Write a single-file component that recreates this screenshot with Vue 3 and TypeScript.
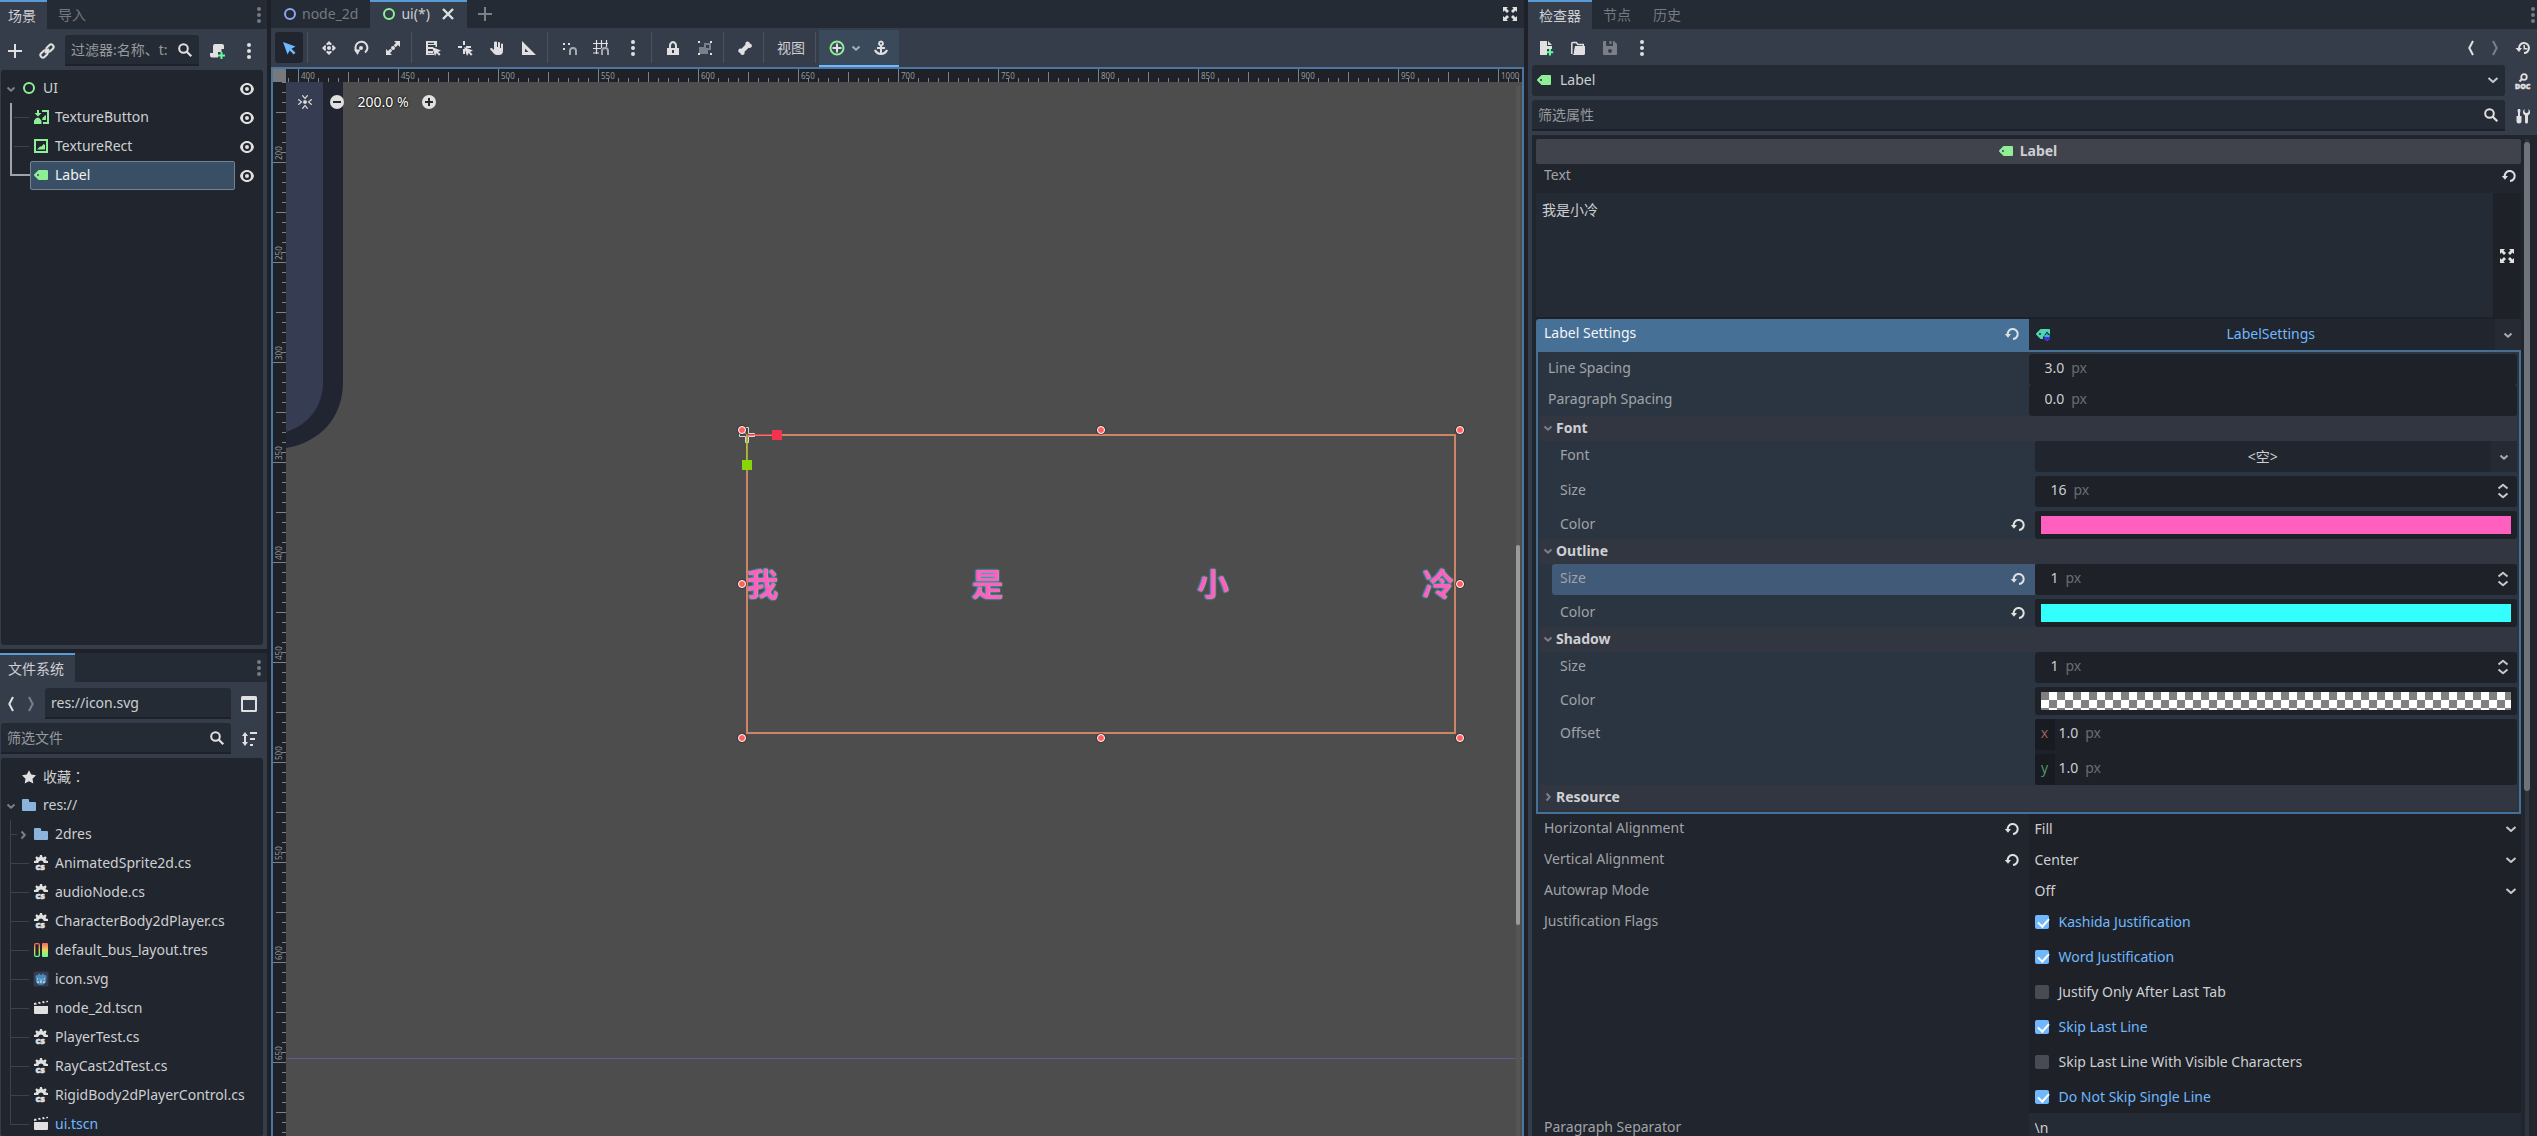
<script setup lang="ts">
import { h, ref } from 'vue'

const W = '#e0e0e0'
const G = '#8eef97'

const scroll = `<path fill="${W}" d="M6 1a2 2 0 0 0-2 2v7H1v2.500a2 2 0 0 0 2 2h7.500a2 2 0 0 0 2-2V6H15V3a2 2 0 0 0-2-2z"/>`
const expand = `<path fill="${W}" d="M1 1h5L4.500 2.500 7 5 5 7 2.500 4.500 1 6zM15 1v5l-1.500-1.500L11 7 9 5l2.500-2.500L10 1zM1 15v-5l1.500 1.500L5 9l2 2-2.500 2.500L6 15zM15 15h-5l1.500-1.500L9 11l2-2 2.500 2.500L15 10z"/>`
const cursor = `<path fill="${W}" d="M7 7l3 9 1.700-3 2.300 2.700 1.500-1.400-2.500-2.400 3-1.500z"/>`
const magnet = `<path fill="none" stroke="#a5a8ad" stroke-width="2" d="M9 15v-4a3 3 0 0 1 6 0v4"/>`

const icons: Record<string, string> = {
  add: `<path fill="${W}" d="M7 1v6H1v2h6v6h2V9h6V7H9V1z"/>`,
  addTab: `<path fill="#7b7f87" d="M7 1v6H1v2h6v6h2V9h6V7H9V1z"/>`,
  link: `<g fill="none" stroke="${W}" stroke-width="2"><rect x="7" y="2.500" width="8" height="5" rx="2.500" transform="rotate(-45 11 5)"/><rect x="1" y="8.500" width="8" height="5" rx="2.500" transform="rotate(-45 5 11)"/><path d="M6 10l4-4"/></g>`,
  search: `<circle cx="6.500" cy="6.500" r="4.300" fill="none" stroke="${W}" stroke-width="2"/><path stroke="${W}" stroke-width="2.200" d="M9.500 9.500L14.300 14.300"/>`,
  scriptNew: scroll + `<path fill="#363d4a" d="M9 9h7v7H9z"/><path fill="#5fff97" d="M11.500 9v2.500H9v2h2.500V16h2v-2.500H16v-2h-2.500V9z"/>`,
  dots: `<g fill="${W}"><circle cx="8" cy="2" r="2"/><circle cx="8" cy="8" r="2"/><circle cx="8" cy="14" r="2"/></g>`,
  dotsDim: `<g fill="#757980"><circle cx="8" cy="2" r="2"/><circle cx="8" cy="8" r="2"/><circle cx="8" cy="14" r="2"/></g>`,
  control: `<circle cx="8" cy="8" r="5" fill="none" stroke="${G}" stroke-width="2"/>`,
  node2d: `<circle cx="8" cy="8" r="5" fill="none" stroke="#8da5f3" stroke-width="2"/>`,
  texButton: `<path fill="${G}" d="M4 1h2v3h2.500L5 7.500 1.500 4H4zM1 15v-2.500a2 2 0 0 1 1-2c1-2.500 4.500-2.500 5.500 0L8.500 12v3zM9 1h7v14h-6v-2h4V3H9zM9 11l1-3h1l1-2 1 1v4z"/>`,
  texRect: `<path fill="${G}" fill-rule="evenodd" d="M1 1h14v14H1zM3 3v10h10V3zM4 11.500h8V7l-1.500-1-2 2.500H7z"/>`,
  label: `<path fill="${G}" fill-rule="evenodd" d="M6 3a1 1 0 0 0-.7.3l-4 4a1 1 0 0 0 0 1.400l4 4A1 1 0 0 0 6 13h8a1 1 0 0 0 1-1V4a1 1 0 0 0-1-1zM5 7a1 1 0 0 1 0 2 1 1 0 0 1 0-2z"/>`,
  labelSettings: `<path fill="#4fd6b3" fill-rule="evenodd" d="M6 3a1 1 0 0 0-.7.3l-4 4a1 1 0 0 0 0 1.400l4 4A1 1 0 0 0 6 13h8a1 1 0 0 0 1-1V4a1 1 0 0 0-1-1zM5 7a1 1 0 0 1 0 2 1 1 0 0 1 0-2z"/><path fill="#21252d" d="M12 5.500l-4 5.500v2h1.500V9h5v2H15V9z"/><path fill="#25b6f0" d="M12 7l-2.500 4h5z"/><path fill="#3a33e6" d="M9 11h6v2.500H9z"/><path fill="#8b2fa8" d="M9.500 13.500h5L12.500 15h-1z"/>`,
  eye: `<path fill="${W}" fill-rule="evenodd" d="M8 2C4.500 2 1.800 4.500 1 8c.8 3.500 3.500 6 7 6s6.200-2.500 7-6c-.8-3.500-3.500-6-7-6zM8 4a4 4 0 0 1 0 8 4 4 0 0 1 0-8zM8 6a2 2 0 0 0 0 4 2 2 0 0 0 0-4z"/>`,
  down: `<path fill="none" stroke="#7b7f87" stroke-width="2" stroke-linejoin="round" d="M4.500 6.500L8 9.800l3.500-3.300"/>`,
  downMid: `<path fill="none" stroke="#a9acb1" stroke-width="2" stroke-linejoin="round" d="M4.500 6.500L8 9.800l3.500-3.300"/>`,
  right: `<path fill="none" stroke="#7b7f87" stroke-width="2" stroke-linejoin="round" d="M6.500 4.500L9.800 8l-3.300 3.500"/>`,
  drop: `<path fill="none" stroke="#c6c8cb" stroke-width="2" stroke-linejoin="round" d="M3.500 6L8 10l4.500-4"/>`,
  back: `<path fill="none" stroke="${W}" stroke-width="2" d="M10 1L6.300 8l3.700 7"/>`,
  forward: `<path fill="none" stroke="#7b7f87" stroke-width="2" d="M6 1l3.700 7L6 15"/>`,
  splitMode: `<path fill="${W}" fill-rule="evenodd" d="M1.500 0h13A1.500 1.500 0 0 1 16 1.500v13a1.500 1.500 0 0 1-1.500 1.500h-13A1.500 1.500 0 0 1 0 14.500v-13A1.500 1.500 0 0 1 1.500 0zM2 4v10h12V4z"/>`,
  sort: `<path fill="${W}" d="M4 1l3 4H5v6h2l-3 4-3-4h2V5H1zM9 1h7v2H9zM9 7h5v2H9zM9 13h3v2H9z"/>`,
  star: `<path fill="${W}" d="M8 1.200l2.200 4.300 4.800.8-3.500 3.400.8 4.800L8 12.300l-4.300 2.200.8-4.800L1 6.300l4.800-.8z"/>`,
  folder: `<path fill="#8ab4dd" d="M2 2a1 1 0 0 0-1 1v10a1 1 0 0 0 1 1h12a1 1 0 0 0 1-1V6a1 1 0 0 0-1-1H9a1 1 0 0 1-1-1V3a1 1 0 0 0-1-1z"/>`,
  cs: `<path fill="${W}" d="M7 0h2l.5 2 1 .4L12.300 1.300l1.400 1.400L12.600 4.500l.4 1 2 .5v2h-4.200A3 3 0 0 0 8 5.500 3 3 0 0 0 5.200 8H1V6l2-.5.4-1L2.300 2.700l1.400-1.400L5.500 2.400l1-.4z"/><text x="2.500" y="15.300" font-size="9" font-weight="900" fill="${W}" stroke="${W}" stroke-width=".5">cs</text>`,
  bus: `<defs><linearGradient id="busFill" x1="0" x2="0" y1="0" y2="1"><stop offset="0" stop-color="#ff5f5f"/><stop offset=".5" stop-color="#e1da5b"/><stop offset="1" stop-color="#5fff97"/></linearGradient></defs><rect x="1.700" y="1.700" width="4.600" height="12.600" rx="1" fill="none" stroke="url(#busFill)" stroke-width="1.300"/><rect x="9" y="1" width="6" height="14" rx="1" fill="url(#busFill)"/>`,
  godot: `<rect width="15" height="15" x=".5" y=".5" rx="1.500" fill="#363d52"/><path fill="#478cbf" d="M2.500 5l1.300-1.200L5 4.500l.5-2 1.500.6L7.500 4h1l.5-.9 1.500-.6.5 2 1.200-.7L13.500 5 13 11c-1 2-3 2.800-5 2.800S4 13 3 11z"/><g fill="#fff"><circle cx="5.300" cy="8" r="1.100"/><circle cx="10.700" cy="8" r="1.100"/><path d="M4 10.500h2v1H4zM7 10.500h2v1H7zM10 10.500h2v1h-2zM7.700 8h.6v2h-.6z"/></g><g fill="#414042"><circle cx="5.400" cy="8" r=".7"/><circle cx="10.600" cy="8" r=".7"/></g>`,
  scene: `<path fill="${W}" d="M1 6h14v7a1 1 0 0 1-1 1H2a1 1 0 0 1-1-1zM1 3l2-.4.8 1.800L1 5zM5 2.200l2-.4.8 1.800-2 .4zM9 1.500l2-.4.8 1.800-2 .4zM13 1l2-.3V2l-1.500.5z"/>`,
  close: `<path stroke="${W}" stroke-width="2.400" d="M3 3l10 10M13 3L3 13"/>`,
  expand,
  select: `<path fill="#6fb8ff" d="M2 2l4.500 12.500 2.200-4 4 4 1.800-1.800-4-4 4-2.200z"/>`,
  move: `<g fill="${W}"><circle cx="8" cy="8" r="2"/><path d="M8 1l3 3-1 1H9L8 4.300 7 5H6L5 4zM8 15l-3-3 1-1h1l1 .7 1-.7h1l1 1zM1 8l3-3 1 1v1l-.7 1 .7 1v1l-1 1zM15 8l-3 3-1-1V9l.7-1-.7-1V6l1-1z"/></g>`,
  rotate: `<path fill="none" stroke="${W}" stroke-width="2" d="M3.800 11.500A6 6 0 1 1 12 12.500"/><path fill="${W}" d="M1 9.500h6.500L4.500 15z"/><circle cx="8" cy="8" r="2" fill="${W}"/>`,
  scale: `<circle cx="8" cy="8" r="2" fill="${W}"/><path fill="${W}" d="M9 1h6v6l-2-2-2.300 2.300-2-2L11 3zM7 15H1V9l2 2 2.300-2.300 2 2L5 13z"/>`,
  listSelect: `<path fill="${W}" fill-rule="evenodd" d="M1 1h11v6h-1.500V5H3v2h5v2H3v2h5v2H3v.5h6V15H1zM3 2.800V4h6V2.800z"/>` + cursor,
  pivot: `<path fill="${W}" d="M6 1h2v4H6zM1 6h4v2H1zM9 6h5v2H9zM6 9h2v5H6z"/>` + cursor,
  pan: `<path fill="${W}" d="M7 1.500c.8 0 1 .4 1 1V7h1V3c0-1.300 2-1.300 2 0v5h1V4.500c0-1.300 2-1.300 2 0V11c0 2.500-1.500 4-4 4H8c-2 0-3-1-4-2.500L1.300 9.500c-.6-1.200.8-2 1.700-1.200L5 10V2.500c0-.6 1-1 2-1z"/>`,
  ruler: `<path fill="${W}" fill-rule="evenodd" d="M1 1v14h14zM4 8.500l3.500 3.500H4z"/>`,
  smartSnap: `<path fill="${W}" d="M2 3h2v2H2zM2 8h2v2H2zM7 3h2v2H7z"/>` + magnet,
  gridSnap: `<path fill="none" stroke="${W}" stroke-width="1.200" d="M3.500 0v14M8.500 0v8M13.500 0v7M0 3.500h15M0 8.500h8M0 13h6"/>` + magnet,
  lock: `<path fill="${W}" fill-rule="evenodd" d="M8 1a5 5 0 0 0-4 5v2H2v7h12V8h-2V6a5 5 0 0 0-4-5zM8 3a3 3 0 0 1 2 3v2H6V6a3 3 0 0 1 2-3zM7 10h2v3H7z"/>`,
  group: `<path fill="#7b7f87" fill-rule="evenodd" d="M7 3h7v7h-3v4H2V7h5zM9 5v3h3V5z"/><path fill="${W}" d="M1 1h2v2H1zM13 1h2v2h-2zM1 13h2v2H1zM13 13h2v2h-2z"/>`,
  bone: `<path fill="${W}" d="M10.500 1.500c-1.700 0-2.500 1.500-2 3L4.500 8.800c-1.500-.6-3.200.3-3.200 2 0 1.300 1 2.100 2 2.200.1 1.200 1 2 2.200 2 1.700 0 2.600-1.600 2-3.200l4.200-4c1.500.6 3.200-.4 3.200-2 0-1.200-1-2.100-2.100-2.200-.1-1.200-1.100-2.100-2.300-2.100z"/>`,
  container: `<circle cx="8" cy="8" r="6.500" fill="none" stroke="${G}" stroke-width="2"/><path fill="${W}" d="M7 3.500h2V7h3.500v2H9v3.500H7V9H3.500V7H7z"/>`,
  anchor: `<path fill="${W}" fill-rule="evenodd" d="M8 .5a3 3 0 0 0-1 5.800V7H4v2h3v3.800C5 12.500 3.500 11 3 9.500l-2 .7C2 13 4.500 15 8 15s6-2 7-4.800l-2-.7c-.5 1.500-2 3-4 3.300V9h3V7H9v-.7A3 3 0 0 0 8 .5zM8 2.500a1 1 0 0 1 0 2 1 1 0 0 1 0-2z"/>`,
  centerView: `<g fill="${W}" stroke="#22252b" stroke-opacity=".4" stroke-width=".4"><circle cx="8" cy="8" r="2"/><path d="M5 1h1l2 2.500L10 1h1v1L8 5.500 5 2zM5 15h1l2-2.500 2 2.500h1v-1l-3-3.500L5 14zM1 5v1l2.500 2L1 10v1h1l3.500-3L2 5zM15 5v1l-2.500 2 2.500 2v1h-1l-3.500-3L14 5z"/></g>`,
  minus: `<circle cx="8" cy="8" r="7" fill="${W}"/><path fill="#26292f" d="M4 7h8v2H4z"/>`,
  plus: `<circle cx="8" cy="8" r="7" fill="${W}"/><path fill="#26292f" d="M7 4h2v3h3v2H9v3H7V9H4V7h3z"/>`,
  fileNew: `<path fill="${W}" d="M2 1h7v5h5v3H9v6H2zM10 1l4 4h-4z"/><path fill="#5fff97" d="M11 9v2.200H8.800v2H11v2.300h2v-2.300h2.200v-2H13V9z"/>`,
  open: `<path fill="none" stroke="${W}" stroke-width="1.500" d="M1.800 14V3.500a1 1 0 0 1 1-1h3.500l1.500 2h5.500V7"/><path fill="${W}" d="M5 6h10v7.500a1.500 1.500 0 0 1-1.500 1.500H2.500C4 14 4 13 4 11z"/>`,
  save: `<path fill="#7b7f87" fill-rule="evenodd" d="M2 1a1 1 0 0 0-1 1v12a1 1 0 0 0 1 1h12a1 1 0 0 0 1-1V4l-3-3h-1v5H4V1zM8 9a2 2 0 0 1 0 4 2 2 0 0 1 0-4zM7.500 1H9.500v3h-2z"/>`,
  history: `<path fill="none" stroke="${W}" stroke-width="2" d="M4 8.500A5 5 0 1 1 9 13"/><path fill="${W}" d="M.5 8h6.500L4 12zM8.500 5H10v3h2.500v1.500h-4z"/>`,
  doc: `<circle cx="9" cy="4" r="2.800" fill="none" stroke="${W}" stroke-width="1.800"/><path stroke="${W}" stroke-width="2" d="M7 6L4.500 8.500"/><text x="0" y="16" font-size="7" font-weight="900" fill="${W}" stroke="${W}" stroke-width=".5">DOC</text>`,
  tools: `<path fill="${W}" d="M3 1h2l.5 1.500L5 5v3h1.500v5A2 2 0 0 1 1.500 13V8H3V5l-.5-2.500zM9.500 1v3l1.500 1h1l1.500-1V1A3.800 3.800 0 0 1 13 7.500V14a1 1 0 0 1-3 0V7.500A3.800 3.800 0 0 1 9.500 1z"/>`,
  revert: `<path fill="none" stroke="${W}" stroke-width="2" d="M3.800 9A5 5 0 1 1 9 13"/><path fill="${W}" d="M.8 8h6.200L4 11.800z"/>`,
  spin: `<path fill="none" stroke="#c6c8cb" stroke-width="2" stroke-linejoin="round" d="M3.500 5.500L8 1.800l4.500 3.700M3.500 10.500L8 14.200l4.500-3.700"/>`
}

const Icon = (p: { n: string }) =>
  h('svg', { width: 16, height: 16, viewBox: '0 0 16 16', 'aria-hidden': 'true', innerHTML: icons[p.n] })
Icon.props = ['n']

const nodes = ref([
  { name: 'TextureButton', icon: 'texButton', on: false },
  { name: 'TextureRect', icon: 'texRect', on: false },
  { name: 'Label', icon: 'label', on: true }
])

const files = [
  { name: 'AnimatedSprite2d.cs', icon: 'cs' },
  { name: 'audioNode.cs', icon: 'cs' },
  { name: 'CharacterBody2dPlayer.cs', icon: 'cs' },
  { name: 'default_bus_layout.tres', icon: 'bus' },
  { name: 'icon.svg', icon: 'godot' },
  { name: 'node_2d.tscn', icon: 'scene' },
  { name: 'PlayerTest.cs', icon: 'cs' },
  { name: 'RayCast2dTest.cs', icon: 'cs' },
  { name: 'RigidBody2dPlayerControl.cs', icon: 'cs' },
  { name: 'ui.tscn', icon: 'scene', open: true }
]

const tools = [
  ['select'],
  ['move', 'rotate', 'scale'],
  ['listSelect', 'pivot', 'pan', 'ruler'],
  ['smartSnap', 'gridSnap', 'dots'],
  ['lock', 'group'],
  ['bone']
]

const xMarks = Array.from({ length: 13 }, (_, i) => ({ at: 12 + i * 100, value: 400 + i * 50 }))
const yMarks = Array.from({ length: 10 }, (_, i) => ({ at: 80 + i * 100, value: 200 + i * 50 }))

const handles = [
  [456, 348], [815, 348], [1174, 348],
  [456, 502], [1174, 502],
  [456, 656], [815, 656], [1174, 656]
]

const text = ref('我是小冷')

const selects = [
  { id: 'halign', name: 'Horizontal Alignment', value: 'Fill', options: ['Left', 'Center', 'Right', 'Fill'], changed: true },
  { id: 'valign', name: 'Vertical Alignment', value: 'Center', options: ['Top', 'Center', 'Bottom', 'Fill'], changed: true },
  { id: 'autowrap', name: 'Autowrap Mode', value: 'Off', options: ['Off', 'Arbitrary', 'Word', 'Word (Smart)'], changed: false }
]

const flags = ref([
  { name: 'Kashida Justification', on: true },
  { name: 'Word Justification', on: true },
  { name: 'Justify Only After Last Tab', on: false },
  { name: 'Skip Last Line', on: true },
  { name: 'Skip Last Line With Visible Characters', on: false },
  { name: 'Do Not Skip Single Line', on: true }
])
</script>

<template>
  <div class="editor">
    <div class="left">
      <section class="dock scene">
        <nav class="tabs">
          <button class="tab on">场景</button>
          <button class="tab">导入</button>
          <button class="tab-menu" aria-label="面板菜单"><Icon n="dotsDim" /></button>
        </nav>
        <div class="bar">
          <button class="tool" aria-label="添加节点"><Icon n="add" /></button>
          <button class="tool" aria-label="实例化场景"><Icon n="link" /></button>
          <label class="field grow">
            <input type="text" placeholder="过滤器:名称、t:" aria-label="过滤器" />
            <Icon n="search" />
          </label>
          <button class="tool" aria-label="附加脚本"><Icon n="scriptNew" /></button>
          <button class="tool" aria-label="更多"><Icon n="dots" /></button>
        </div>
        <ul class="tree scene-tree">
          <li class="row">
            <span class="arrow"><Icon n="down" /></span>
            <span class="item root"><Icon n="control" />UI</span>
            <button class="eye" aria-label="可见"><Icon n="eye" /></button>
          </li>
          <li v-for="n in nodes" :key="n.name" class="row branch" :class="{ active: n.on }">
            <span class="guide"></span>
            <span class="item"><Icon :n="n.icon" />{{ n.name }}</span>
            <button class="eye" aria-label="可见"><Icon n="eye" /></button>
          </li>
        </ul>
      </section>

      <section class="dock files">
        <nav class="tabs">
          <button class="tab on">文件系统</button>
          <button class="tab-menu" aria-label="面板菜单"><Icon n="dotsDim" /></button>
        </nav>
        <div class="bar path-bar">
          <button class="nav" aria-label="后退"><Icon n="back" /></button>
          <button class="nav" aria-label="前进"><Icon n="forward" /></button>
          <label class="field grow path"><input type="text" value="res://icon.svg" aria-label="路径" /></label>
          <button class="tool" aria-label="拆分模式"><Icon n="splitMode" /></button>
        </div>
        <div class="bar filter-bar">
          <label class="field grow">
            <input type="text" placeholder="筛选文件" aria-label="筛选文件" />
            <Icon n="search" />
          </label>
          <button class="tool" aria-label="排序"><Icon n="sort" /></button>
        </div>
        <ul class="tree file-tree">
          <li class="row fav"><span class="arrow"></span><span class="item root"><Icon n="star" />收藏：</span></li>
          <li class="row"><span class="arrow"><Icon n="down" /></span><span class="item root"><Icon n="folder" />res://</span></li>
          <li class="row branch">
            <span class="guide short"><Icon n="right" /></span><span class="item"><Icon n="folder" />2dres</span>
          </li>
          <li v-for="f in files" :key="f.name" class="row branch" :class="{ opened: f.open }">
            <span class="guide"></span><span class="item"><Icon :n="f.icon" />{{ f.name }}</span>
          </li>
        </ul>
      </section>
    </div>

    <main class="center">
      <nav class="scene-tabs">
        <button class="scene-tab"><Icon n="node2d" />node_2d</button>
        <button class="scene-tab on"><Icon n="control" />ui(*)<Icon n="close" /></button>
        <button class="add-tab" aria-label="新建场景"><Icon n="addTab" /></button>
        <button class="add-tab wide" aria-label="专注模式"><Icon n="expand" /></button>
      </nav>
      <div class="toolbar">
        <template v-for="(g, i) in tools" :key="i">
          <button v-for="t in g" :key="t" class="tool" :class="{ pressed: t === 'select' }" :aria-label="t"><Icon :n="t" /></button>
          <span class="sep"></span>
        </template>
        <button class="view">视图</button>
        <span class="sep"></span>
        <div class="context">
          <button class="tool combo" aria-label="容器布局"><Icon n="container" /><Icon n="downMid" /></button>
          <button class="tool" aria-label="锚点"><Icon n="anchor" /></button>
        </div>
      </div>
      <div class="viewport">
        <div class="corner"></div>
        <svg class="ruler" height="13">
          <defs>
            <pattern id="tickX" x="12" width="100" height="13" patternUnits="userSpaceOnUse">
              <path class="tick" d="M.5 0v13M50.500 3v10M10.500 9v4M20.500 9v4M30.500 9v4M40.500 9v4M60.500 9v4M70.500 9v4M80.500 9v4M90.500 9v4" />
            </pattern>
          </defs>
          <rect width="100%" height="13" fill="url(#tickX)" />
          <text v-for="m in xMarks" :key="m.value" :x="m.at + 3" y="10">{{ m.value }}</text>
        </svg>
        <svg class="ruler" width="13">
          <defs>
            <pattern id="tickY" y="80" width="13" height="100" patternUnits="userSpaceOnUse">
              <path class="tick" d="M0 .5h13M3 50.500h10M9 10.500h4M9 20.500h4M9 30.500h4M9 40.500h4M9 60.500h4M9 70.500h4M9 80.500h4M9 90.500h4" />
            </pattern>
          </defs>
          <rect width="13" height="100%" fill="url(#tickY)" />
          <text v-for="m in yMarks" :key="m.value" :transform="`translate(9 ${m.at - 2}) rotate(-90)`">{{ m.value }}</text>
        </svg>
        <div class="canvas">
          <svg class="layer">
            <path fill="#212532" d="M0 0H57V300C57 335 35 360 0 366z" />
            <path fill="#363d52" d="M0 0H37V300C37 325 22 343 0 350z" />
            <path stroke="#5c5a94" d="M0 976.500H2400" />
          </svg>
          <div class="label-node"><span v-for="c in text" :key="c">{{ c }}</span></div>
          <svg class="layer">
            <rect x="461" y="353" width="708" height="298" fill="none" stroke="#cc8566" stroke-width="2" />
            <path fill="none" stroke="#d8d8d8" d="M459.500 345.500h3v6h6v3h-6v6h-3v-6h-6v-3h6z" />
            <path stroke="#f6334f" d="M461 352.500h31" />
            <path stroke="#89d606" d="M460.500 353v30" />
            <rect x="486" y="348" width="10" height="10" fill="#f6334f" />
            <rect x="456" y="378" width="10" height="10" fill="#89d606" />
            <g v-for="(p, i) in handles" :key="i">
              <circle :cx="p[0]" :cy="p[1]" r="4" fill="#ff5f5f" stroke="#2b2b2b" stroke-opacity=".6" stroke-width="2" />
              <circle :cx="p[0]" :cy="p[1]" r="3.500" fill="#ff5f5f" stroke="#fff" />
            </g>
          </svg>
          <div class="zoom">
            <button aria-label="居中视图"><Icon n="centerView" /></button>
            <button aria-label="缩小"><Icon n="minus" /></button>
            <button class="percent">200.0 %</button>
            <button aria-label="放大"><Icon n="plus" /></button>
          </div>
          <div class="vscroll"><span></span></div>
        </div>
      </div>
    </main>

    <aside class="dock inspector">
      <nav class="tabs">
        <button class="tab on">检查器</button>
        <button class="tab">节点</button>
        <button class="tab">历史</button>
        <button class="tab-menu" aria-label="面板菜单"><Icon n="dotsDim" /></button>
      </nav>
      <div class="bar insp-bar">
        <button class="tool" aria-label="新建资源"><Icon n="fileNew" /></button>
        <button class="tool" aria-label="加载资源"><Icon n="open" /></button>
        <button class="tool" aria-label="保存资源"><Icon n="save" /></button>
        <button class="tool" aria-label="更多"><Icon n="dots" /></button>
        <span class="grow"></span>
        <button class="nav" aria-label="后退"><Icon n="back" /></button>
        <button class="nav" aria-label="前进"><Icon n="forward" /></button>
        <button class="tool" aria-label="历史"><Icon n="history" /></button>
      </div>
      <div class="bar line">
        <button class="object grow"><Icon n="label" /><span class="grow">Label</span><Icon n="drop" /></button>
        <button class="tool" aria-label="文档"><Icon n="doc" /></button>
      </div>
      <div class="bar line">
        <label class="field grow">
          <input type="text" placeholder="筛选属性" aria-label="筛选属性" />
          <Icon n="search" />
        </label>
        <button class="tool" aria-label="属性设置"><Icon n="tools" /></button>
      </div>

      <div class="props">
        <div class="list">
          <h2 class="category"><Icon n="label" />Label</h2>
          <div class="text-head">
            <label for="text">Text</label>
            <button class="revert" aria-label="重置"><Icon n="revert" /></button>
          </div>
          <div class="text-edit">
            <textarea id="text" v-model="text"></textarea>
            <button aria-label="展开"><Icon n="expand" /></button>
          </div>

          <div class="prop settings">
            <div class="name"><span>Label Settings</span><button class="revert" aria-label="重置"><Icon n="revert" /></button></div>
            <div class="res">
              <button class="res-main blue"><Icon n="labelSettings" /><span>LabelSettings</span></button>
              <button class="res-drop" aria-label="资源菜单"><Icon n="downMid" /></button>
            </div>
          </div>

          <div class="sub">
            <div class="prop">
              <label class="name" for="ls">Line Spacing</label>
              <div class="num"><input id="ls" type="text" value="3.0" /><i>px</i></div>
            </div>
            <div class="prop">
              <label class="name" for="ps">Paragraph Spacing</label>
              <div class="num"><input id="ps" type="text" value="0.0" /><i>px</i></div>
            </div>

            <button class="section"><Icon n="down" />Font</button>
            <div class="group">
              <div class="prop">
                <span class="name">Font</span>
                <div class="res">
                  <button class="res-main"><span>&lt;空&gt;</span></button>
                  <button class="res-drop" aria-label="字体菜单"><Icon n="downMid" /></button>
                </div>
              </div>
              <div class="prop">
                <label class="name" for="fs">Size</label>
                <div class="num"><input id="fs" type="text" value="16" /><i>px</i><Icon n="spin" /></div>
              </div>
              <div class="prop color">
                <div class="name"><span>Color</span><button class="revert" aria-label="重置"><Icon n="revert" /></button></div>
                <button class="swatch" aria-label="Font Color"><span class="pink"></span></button>
              </div>
            </div>

            <button class="section"><Icon n="down" />Outline</button>
            <div class="group">
              <div class="prop">
                <div class="name hot"><label for="os">Size</label><button class="revert" aria-label="重置"><Icon n="revert" /></button></div>
                <div class="num"><input id="os" type="text" value="1" /><i>px</i><Icon n="spin" /></div>
              </div>
              <div class="prop color">
                <div class="name"><span>Color</span><button class="revert" aria-label="重置"><Icon n="revert" /></button></div>
                <button class="swatch" aria-label="Outline Color"><span class="cyan"></span></button>
              </div>
            </div>

            <button class="section"><Icon n="down" />Shadow</button>
            <div class="group">
              <div class="prop">
                <label class="name" for="ss">Size</label>
                <div class="num"><input id="ss" type="text" value="1" /><i>px</i><Icon n="spin" /></div>
              </div>
              <div class="prop color">
                <span class="name">Color</span>
                <button class="swatch" aria-label="Shadow Color"><span class="clear"></span></button>
              </div>
              <div class="prop">
                <span class="name">Offset</span>
                <div class="vec">
                  <div class="axis x"><label for="ox">x</label><input id="ox" type="text" value="1.0" /><i>px</i></div>
                  <div class="axis y"><label for="oy">y</label><input id="oy" type="text" value="1.0" /><i>px</i></div>
                </div>
              </div>
            </div>

            <button class="section"><Icon n="right" />Resource</button>
          </div>

          <div v-for="s in selects" :key="s.id" class="prop">
            <div class="name">
              <label :for="s.id">{{ s.name }}</label>
              <button v-if="s.changed" class="revert" aria-label="重置"><Icon n="revert" /></button>
            </div>
            <div class="drop">
              <select :id="s.id" :value="s.value"><option v-for="o in s.options" :key="o">{{ o }}</option></select>
              <Icon n="drop" />
            </div>
          </div>

          <div class="prop">
            <span class="name">Justification Flags</span>
            <div class="flags">
              <label v-for="f in flags" :key="f.name" :class="{ checked: f.on }">
                <input v-model="f.on" type="checkbox" />{{ f.name }}
              </label>
            </div>
          </div>
          <div class="prop last">
            <label class="name" for="sepr">Paragraph Separator</label>
            <input id="sepr" class="plain" type="text" value="\n" />
          </div>
        </div>
        <div class="pscroll"><span></span></div>
      </div>
    </aside>
  </div>
</template>

<style>
html,
body {
  margin: 0;
  background: #1e2228;
  overflow: hidden;
}
</style>

<style scoped>
.editor {
  display: grid;
  grid-template-columns: 267px minmax(0, 1253fr) minmax(0, 1009fr);
  gap: 4px;
  height: 100vh;
  background: #1e2228;
  color: #cdcfd2;
  font: 14px/20px 'Noto Sans', 'Noto Sans CJK SC', sans-serif;
  overflow: hidden;
}
.editor * {
  box-sizing: border-box;
}
svg {
  flex: none;
  display: block;
  overflow: visible;
}
button,
input,
select,
textarea {
  margin: 0;
  padding: 0;
  border: 0;
  background: none;
  color: inherit;
  font: inherit;
  outline: 0;
  appearance: none;
}
button {
  display: flex;
  align-items: center;
  justify-content: center;
}
.grow {
  flex: 1;
  min-width: 0;
}
i {
  font-style: normal;
  color: #696d73;
}

/* docks */
.left {
  display: flex;
  flex-direction: column;
  gap: 4px;
  min-height: 0;
}
.dock {
  display: flex;
  flex-direction: column;
  background: #363d4a;
  min-height: 0;
  overflow: hidden;
}
.scene {
  flex: 645 1 0;
  padding-bottom: 4px;
}
.files {
  flex: 483 1 0;
}
.tabs {
  display: flex;
  height: 29px;
  flex: none;
  background: #252b34;
}
.tab {
  padding: 1px 11px 0;
  color: #757980;
}
.tab.on {
  padding: 0 11px 0 8px;
  background: #363d4a;
  border-top: 2px solid #5a9bd5;
  color: #cdcfd2;
}
.tab-menu {
  margin-left: auto;
  width: 16px;
}
.bar {
  display: flex;
  align-items: center;
  gap: 4px;
  flex: none;
  padding: 0 4px 0 1px;
}
.tool {
  width: 28px;
  height: 31px;
  flex: none;
  border-radius: 3px;
}
.field {
  display: flex;
  align-items: center;
  height: 31px;
  padding: 0 6px;
  background: #252b34;
  border-bottom: 2px solid #1e2228;
  border-radius: 3px 3px 0 0;
}
.field input {
  flex: 1;
  min-width: 0;
  width: 0;
}
.field input::placeholder {
  color: #969a9f;
  opacity: 1;
}
.scene .bar,
.path-bar {
  padding: 6px 4px 4px 1px;
}
.nav {
  width: 20px;
  height: 31px;
}
.path-bar .nav + .nav {
  margin-left: -4px;
}
.tree {
  flex: 1;
  min-height: 0;
  margin: 0 4px 0 1px;
  padding: 4px 0 0;
  background: #21252d;
  border-radius: 3px;
  list-style: none;
  overflow: hidden;
}
.file-tree {
  margin-top: 4px;
  padding-top: 5px;
}
.row {
  display: flex;
  align-items: center;
  height: 29px;
}
.row.fav {
  height: 28px;
  font-family: 'Noto Sans', 'Noto Sans CJK TC', sans-serif;
}
.arrow {
  width: 20px;
  flex: none;
  display: flex;
  justify-content: center;
}
.item {
  display: flex;
  align-items: center;
  gap: 6px;
  flex: 1;
  height: 29px;
  padding: 0 0 1px 2px;
  border: 1px solid transparent;
  border-radius: 2px;
  white-space: nowrap;
}
.item.root {
  padding-left: 0;
  border-left: 0;
}
.guide {
  width: 20px;
  height: 29px;
  flex: none;
  margin-left: 9px;
  background:
    linear-gradient(#3c424c, #3c424c) 0 14px / 19px 1px no-repeat,
    linear-gradient(#3c424c, #3c424c) 0 0 / 1px 100% no-repeat;
}
.guide.short {
  display: flex;
  align-items: center;
  padding-left: 5px;
  background-size: 7px 1px, 1px 100%;
}
.file-tree .row:last-child .guide {
  background-size: 19px 1px, 1px 14px;
}
.scene-tree .guide {
  background:
    linear-gradient(#3c424c, #3c424c) 4px 14px / 15px 1px no-repeat,
    linear-gradient(#a0a3a8, #a0a3a8) 0 0 / 2px 100% no-repeat;
}
.scene-tree .active .guide {
  background:
    linear-gradient(#a0a3a8, #a0a3a8) 0 13px / 20px 2px no-repeat,
    linear-gradient(#a0a3a8, #a0a3a8) 0 0 / 2px 14px no-repeat;
}
.active .item {
  background: #384f66;
  border-color: #76828f;
  color: #f0f1f2;
}
.opened {
  color: #6fb8ff;
}
.eye {
  width: 16px;
  height: 28px;
  margin: 0 8px 0 4px;
}

/* centre */
.center {
  display: flex;
  flex-direction: column;
  min-width: 0;
  min-height: 0;
  background: #363d4a;
}
.scene-tabs {
  display: flex;
  height: 28px;
  flex: none;
  background: #252b34;
}
.scene-tab {
  gap: 4px;
  padding: 0 12px 0 11px;
  color: #757980;
}
.scene-tab.on {
  padding: 0 11px 2px;
  background: #363d4a;
  border-top: 2px solid #5a9bd5;
  color: #cdcfd2;
}
.scene-tab.on svg:last-child {
  margin-left: 6px;
}
.add-tab {
  width: 36px;
}
.add-tab.wide {
  width: 28px;
  margin-left: auto;
}
.toolbar {
  display: flex;
  align-items: center;
  gap: 4px;
  height: 39px;
  flex: none;
  padding-left: 4px;
}
.pressed {
  background: #21262e;
}
.sep {
  width: 4px;
  height: 31px;
  flex: none;
  border-left: 1px solid #4b515d;
}
.view {
  width: 40px;
  height: 31px;
}
.context {
  display: flex;
  align-items: center;
  gap: 4px;
  height: 37px;
  margin: 2px 0 0 -4px;
  padding: 0 4px;
  background: #3b4a5a;
  border-bottom: 2px solid #6fb8ff;
}
.combo {
  width: 40px;
  gap: 3px;
  padding-left: 6px;
  justify-content: flex-start;
}
.viewport {
  flex: 1;
  min-height: 0;
  display: grid;
  grid-template: 13px minmax(0, 1fr) / 13px minmax(0, 1fr);
  border: 2px solid #4a76a0;
  border-bottom: 0;
  background: #1e2228;
}
.corner {
  background: #77797d;
}
.ruler {
  width: 100%;
  height: 100%;
  overflow: hidden;
}
.ruler text {
  font-size: 8px;
  fill: #94979b;
}
.tick {
  stroke: #7d8084;
}
.canvas {
  position: relative;
  background: #4d4d4d;
  overflow: hidden;
}
.layer {
  position: absolute;
  inset: 0;
  width: 100%;
  height: 100%;
}
.label-node {
  position: absolute;
  left: 460px;
  top: 352px;
  width: 708px;
  height: 300px;
  padding-bottom: 5px;
  display: flex;
  align-items: center;
  justify-content: space-between;
  font: 700 32px/48px 'Noto Sans CJK SC', sans-serif;
  color: #ff5fbf;
  text-shadow: 0 0 2px rgba(51, 255, 255, 0.6), 0 0 2px rgba(51, 255, 255, 0.6);
}
.zoom {
  position: absolute;
  left: 8px;
  top: 8px;
  display: flex;
  align-items: center;
  height: 24px;
  color: #fff;
}
.zoom button {
  width: 22px;
  height: 24px;
  margin-right: 10px;
}
.zoom .percent {
  width: 70px;
  margin: 0 0 0 -10px;
  text-shadow: 0 0 2px #000, 0 0 2px #000;
}
.vscroll {
  position: absolute;
  right: 2px;
  top: 4px;
  bottom: 0;
  width: 4px;
  background: #555;
}
.vscroll span {
  display: block;
  margin-top: 459px;
  height: 380px;
  border-radius: 2px;
  background: #9b9b9b;
}

/* inspector */
.inspector .tab.on {
  padding: 0 11px;
}
.inspector .tab-menu {
  width: 8px;
}
.insp-bar {
  height: 36px;
  padding: 2px 0 0 4px;
}
.line {
  padding: 0 0 0 4px;
  margin-bottom: 4px;
}
.object {
  height: 31px;
  padding: 0 4px 1px;
  gap: 8px;
  background: #252b34;
  border-radius: 3px;
  text-align: left;
}
.props {
  flex: 1;
  min-height: 0;
  display: flex;
  margin-left: 4px;
  padding: 4px 7px 0 4px;
  gap: 3px;
  background: #21252d;
  overflow: hidden;
}
.list {
  flex: 1;
  min-width: 0;
}
.category {
  display: flex;
  align-items: center;
  justify-content: center;
  gap: 6px;
  height: 25px;
  margin: 0;
  padding: 0 2px 2px 0;
  background: #40434c;
  border-radius: 2px;
  font: 700 14px/20px 'Noto Sans', sans-serif;
}
.text-head {
  display: flex;
  justify-content: space-between;
  height: 29px;
  padding: 1px 4px 0 8px;
  color: #a0a3a7;
}
.text-edit {
  display: flex;
  height: 126px;
}
.text-edit textarea {
  flex: 1;
  padding: 7px 6px;
  background: #252b34;
  border-bottom: 2px solid #1e2228;
  resize: none;
}
.text-edit button {
  width: 28px;
  background: #1e2228;
}
.prop {
  display: grid;
  grid-template-columns: minmax(0, 1fr) minmax(0, 1fr);
  min-height: 31px;
}
.name {
  display: flex;
  align-items: flex-start;
  justify-content: space-between;
  height: 31px;
  padding: 4px 8px 0;
  color: #a0a3a7;
}
.revert {
  width: 16px;
  height: 22px;
}
.name .revert {
  margin-right: 1px;
}
.settings > .name {
  background: #467096;
  color: #f4f5f6;
  border-radius: 3px 0 0 0;
}
.res {
  display: flex;
  height: 31px;
  background: #21252d;
  border-radius: 3px;
}
.res-main {
  flex: 1;
}
.res-main span {
  flex: 1;
}
.res-main.blue {
  padding: 0 4px 1px 6px;
}
.blue {
  color: #6fb8ff;
}
.res-drop {
  width: 26px;
  background: #252a33;
}
.sub {
  padding: 2px;
  border: 2px solid #467096;
  background: #2b3542;
}
.section {
  width: 100%;
  height: 25px;
  justify-content: flex-start;
  padding: 0 0 2px;
  background: #313641;
  font-weight: 700;
}
.group {
  display: flex;
  flex-direction: column;
  gap: 4px;
  padding-left: 12px;
}
.num {
  display: flex;
  align-items: center;
  gap: 7px;
  height: 31px;
  padding: 0 6px 3px 16px;
  background: #1e2228;
  border-radius: 3px;
}
.num svg {
  margin: 2px 0 0 auto;
}
.num input,
.axis input {
  field-sizing: content;
}
.color {
  min-height: 28px;
}
.color .name {
  height: 28px;
  padding-top: 3px;
}
.swatch {
  height: 28px;
  padding: 5px 6px;
  background: #1e2228;
  border-radius: 3px;
  align-items: stretch;
}
.swatch span {
  flex: 1;
}
.pink {
  background: #ff5fbf;
}
.cyan {
  background: #33ffff;
}
.clear {
  background: repeating-conic-gradient(#fff 0 25%, #808080 0 50%) 0 0 / 16px 16px;
}
.hot {
  background: #405a77;
  border-radius: 3px 0 0 3px;
}
.vec {
  display: flex;
  flex-direction: column;
  gap: 4px;
  background: #1e2228;
  border-radius: 3px;
}
.axis {
  display: flex;
  align-items: center;
  height: 31px;
}
.axis label {
  width: 20px;
  height: 31px;
  margin-right: 4px;
  padding-top: 4px;
  background: #181b21;
  border-radius: 3px;
  text-align: center;
}
.axis i {
  margin-left: 7px;
}
.axis input,
.axis i {
  padding-bottom: 3px;
}
.x label {
  color: #9a6156;
}
.y label {
  color: #539065;
}
.drop {
  display: flex;
  align-items: center;
  background: #1e2228;
  padding: 0 2px 1px 0;
}
.drop select {
  flex: 1;
  height: 28px;
  padding: 0 16px 0 6px;
  margin-right: -16px;
}
.drop svg {
  pointer-events: none;
}
.flags {
  display: flex;
  flex-direction: column;
  gap: 4px;
  background: #1e2228;
}
.flags label {
  display: flex;
  align-items: center;
  gap: 10px;
  height: 31px;
  padding: 0 0 1px 6px;
}
.flags .checked {
  color: #6fb8ff;
}
.flags input {
  width: 14px;
  height: 14px;
  border-radius: 2px;
  background: #484b54;
}
.flags input:checked {
  background: #6fb8ff;
}
.flags input:checked::after {
  content: '';
  display: block;
  width: 5px;
  height: 9px;
  margin: 1px 0 0 5px;
  border: solid #fff;
  border-width: 0 2px 2px 0;
  transform: rotate(42deg);
}
.plain {
  width: 100%;
  height: 31px;
  padding: 0 6px 2px;
  background: #252b34;
}
.pscroll {
  width: 6px;
  padding-top: 3px;
  background: linear-gradient(#30343e, #30343e) 1px 0 / 4px 100% no-repeat;
}
.pscroll span {
  display: block;
  height: 649px;
  border-radius: 3px;
  background: #6f737a;
}
</style>
